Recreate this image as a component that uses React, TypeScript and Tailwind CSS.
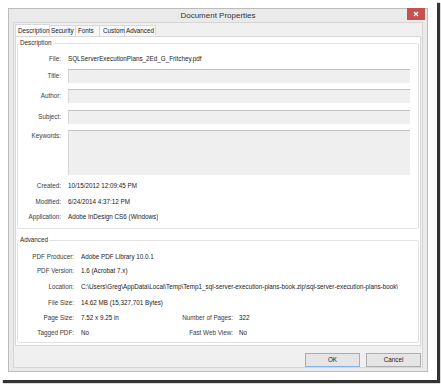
import type { ReactNode } from 'react';

const tabs = [
  { name: 'Description', w: 'w-[35px]', pl: 'pl-[2px]', active: true },
  { name: 'Security', w: 'w-[26px]', pl: 'pl-[1px]', active: false },
  { name: 'Fonts', w: 'w-[24px]', pl: 'pl-[2px]', active: false },
  { name: 'Custom', w: 'w-[25px]', pl: 'pl-[3px]', active: false },
  { name: 'Advanced', w: 'w-[31px]', pl: 'pl-[1px]', active: false },
];

function GroupBox({ title, className = '', children }: { title: string; className?: string; children: ReactNode }) {
  return (
    <div className={`border border-[#e2e2e2] rounded-[2px] pr-[8px] ${className}`}>
      <div className="-mt-[5px] ml-[1px] h-[8px] w-fit bg-white px-[1px] leading-[8px] text-[#2a2a2a]">{title}</div>
      {children}
    </div>
  );
}

function Row({ label, lw, className = '', children }: { label: string; lw: string; className?: string; children: ReactNode }) {
  return (
    <div className={`flex h-[8px] items-center gap-[7px] leading-[8px] ${className}`}>
      <span className={`${lw} shrink-0 text-right text-[#3a3a3a]`}>{label}</span>
      <span className="min-w-0 overflow-hidden whitespace-nowrap text-[#1a1a1a]">{children}</span>
    </div>
  );
}

function InputRow({ label, h, className = '', top = false }: { label: string; h: string; className?: string; top?: boolean }) {
  return (
    <div className={`flex ${top ? 'items-start' : 'items-center'} gap-[7px] ${h} ${className}`}>
      <span className={`w-[43px] shrink-0 text-right leading-[8px] text-[#3a3a3a] ${top ? 'pt-[2px]' : ''}`}>{label}</span>
      <div className="h-full flex-1 border-t border-l border-t-[#c2c2c2] border-l-[#d8d8d8] bg-[#efefef]" />
    </div>
  );
}

export default function App() {
  return (
    <div className="h-[384px] w-[441px] bg-white font-['Liberation_Sans',Arial,sans-serif] text-[6.3px]">
      {/* photo frame */}
      <div className="h-[380px] w-[437px] bg-white pl-[8px] pt-[8px] shadow-[3px_3px_1px_rgba(0,0,0,0.8)]">
        {/* window */}
        <div className="flex h-[364px] w-[420px] flex-col border border-[#bcbcbc] bg-[#eaeaea] px-[4px] pb-[3px]">
          <div className="-mx-[4px] flex h-[13px] shrink-0">
            <div className="w-[20px]" />
            <div className="flex-1 text-center text-[8px] leading-[14px] text-[#333]">Document Properties</div>
            <div className="mr-[2px] -mt-[1px] flex h-[12px] w-[18px] items-center justify-center bg-[#c75050]">
              <svg width="6" height="6" viewBox="0 0 6 6">
                <path d="M1 1L5 5M5 1L1 5" stroke="white" strokeWidth="1.3" />
              </svg>
            </div>
          </div>

          {/* client area */}
          <div className="flex flex-1 flex-col border border-[#d6d6d6] bg-[#f0f0f0] px-[1px] pt-[1px]">
            <div className="flex h-[12px] items-end">
              {tabs.map((t) => (
                <div
                  key={t.name}
                  className={`${t.w} ${t.pl} border-t border-r border-[#d9d9d9] leading-[9px] text-[#1a1a1a] ${
                    t.active ? 'h-[12px] border-l bg-white pt-[1px]' : 'h-[11px] bg-[#f7f7f7]'
                  }`}
                >
                  {t.name}
                </div>
              ))}
            </div>

            {/* tab page */}
            <div className="flex h-[310px] flex-col border border-[#d9d9d9] bg-white px-[1px] pt-[6px]">
              <GroupBox title="Description" className="h-[186px]">
                <Row label="File:" lw="w-[43px]" className="mt-[8px]">SQLServerExecutionPlans_2Ed_G_Fritchey.pdf</Row>
                <InputRow label="Title:" h="h-[14px]" className="mt-[6px]" />
                <InputRow label="Author:" h="h-[14px]" className="mt-[6px]" />
                <InputRow label="Subject:" h="h-[14px]" className="mt-[7px]" />
                <InputRow label="Keywords:" h="h-[45px]" className="mt-[6px]" top />
                <Row label="Created:" lw="w-[43px]" className="mt-[7px]">10/15/2012 12:09:45 PM</Row>
                <Row label="Modified:" lw="w-[43px]" className="mt-[8px]">6/24/2014 4:37:12 PM</Row>
                <Row label="Application:" lw="w-[43px]" className="mt-[7px]">Adobe InDesign CS6 (Windows)</Row>
              </GroupBox>

              <GroupBox title="Advanced" className="mt-[11px] h-[103px]">
                <Row label="PDF Producer:" lw="w-[56px]" className="mt-[9px]">Adobe PDF Library 10.0.1</Row>
                <Row label="PDF Version:" lw="w-[56px]" className="mt-[6px]">1.6 (Acrobat 7.x)</Row>
                <Row label="Location:" lw="w-[56px]" className="mt-[8px]">
                  C:\Users\Greg\AppData\Local\Temp\Temp1_sql-server-execution-plans-book.zip\sql-server-execution-plans-book\
                </Row>
                <Row label="File Size:" lw="w-[56px]" className="mt-[8px]">14.62 MB (15,327,701 Bytes)</Row>
                <div className="mt-[7px] flex h-[8px] items-center leading-[8px]">
                  <span className="w-[56px] shrink-0 text-right text-[#3a3a3a]">Page Size:</span>
                  <span className="ml-[7px] w-[96px] text-[#1a1a1a]">7.52 x 9.25 in</span>
                  <span className="w-[56px] text-right text-[#3a3a3a]">Number of Pages:</span>
                  <span className="ml-[6px] text-[#1a1a1a]">322</span>
                </div>
                <div className="mt-[7px] flex h-[8px] items-center leading-[8px]">
                  <span className="w-[56px] shrink-0 text-right text-[#3a3a3a]">Tagged PDF:</span>
                  <span className="ml-[7px] w-[96px] text-[#1a1a1a]">No</span>
                  <span className="w-[56px] text-right text-[#3a3a3a]">Fast Web View:</span>
                  <span className="ml-[6px] text-[#1a1a1a]">No</span>
                </div>
              </GroupBox>
            </div>

            {/* buttons */}
            <div className="flex justify-end gap-[6px] pt-[7px]">
              <button className="h-[14px] w-[55px] border border-[#7eb4ea] bg-[#e5e5e5] leading-[12px] text-[#1a1a1a]">OK</button>
              <button className="h-[14px] w-[55px] border border-[#adadad] bg-[#e5e5e5] leading-[12px] text-[#1a1a1a]">Cancel</button>
            </div>
          </div>
        </div>
      </div>
    </div>
  );
}
